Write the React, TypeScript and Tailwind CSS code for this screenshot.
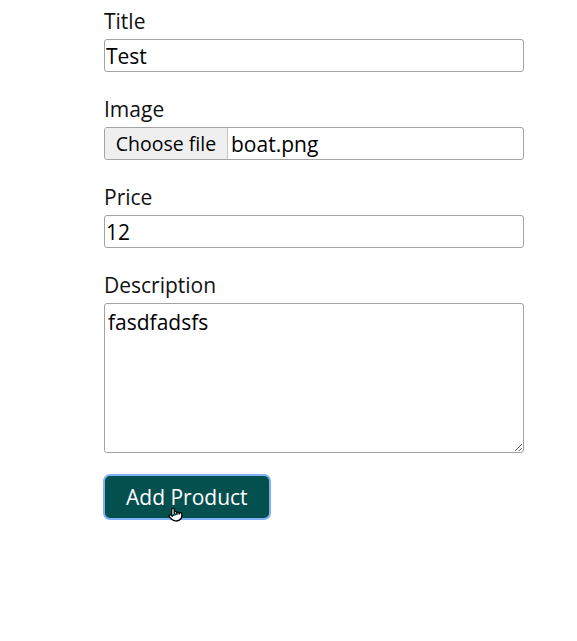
import React from "react";
import { Pointer } from "lucide-react";

const fieldBox =
  "block w-[420px] rounded-[3px] border border-[#a3a3a3] bg-white text-[21px] leading-[28px] text-black";

const Label: React.FC<{ children: React.ReactNode }> = ({ children }) => (
  <label className="mb-[4px] block text-[21px] leading-[28px] text-[#111]">
    {children}
  </label>
);

export default function App() {
  return (
    <div
      className="min-h-[641px] w-[577px] bg-white pl-[104px] pt-[7px]"
      style={{ fontFamily: '"Open Sans", "Noto Sans", sans-serif' }}
    >
      <div className="flex flex-col gap-[23px]">
        <div>
          <Label>Title</Label>
          <input
            className={`${fieldBox} h-[33px] px-[1px] outline-none`}
            defaultValue="Test"
          />
        </div>

        <div>
          <Label>Image</Label>
          <div className={`${fieldBox} flex h-[33px] items-stretch overflow-hidden`}>
            <span className="flex w-[123px] items-center justify-center border-r border-[#c4c4c4] bg-[#efefef] text-[19.5px]">
              Choose file
            </span>
            <span className="flex items-center pl-[3px]">boat.png</span>
          </div>
        </div>

        <div>
          <Label>Price</Label>
          <input
            className={`${fieldBox} h-[33px] px-[1px] outline-none`}
            defaultValue="12"
          />
        </div>

        <div>
          <Label>Description</Label>
          <textarea
            className={`${fieldBox} h-[150px] px-[3px] pt-[4px] outline-none`}
            defaultValue="fasdfadsfs"
          />
        </div>

        <div className="relative ml-[1px] mt-0 w-fit">
          <button className="rounded-[5px] bg-[#04504f] px-[21px] py-[6px] text-[21px] leading-[30px] text-white ring-2 ring-[#7fb2f5]">
            Add Product
          </button>
          <Pointer
            className="absolute left-[63px] top-[31px]"
            width={15}
            height={15}
            fill="white"
            stroke="black"
            strokeWidth={2}
          />
        </div>
      </div>
    </div>
  );
}
